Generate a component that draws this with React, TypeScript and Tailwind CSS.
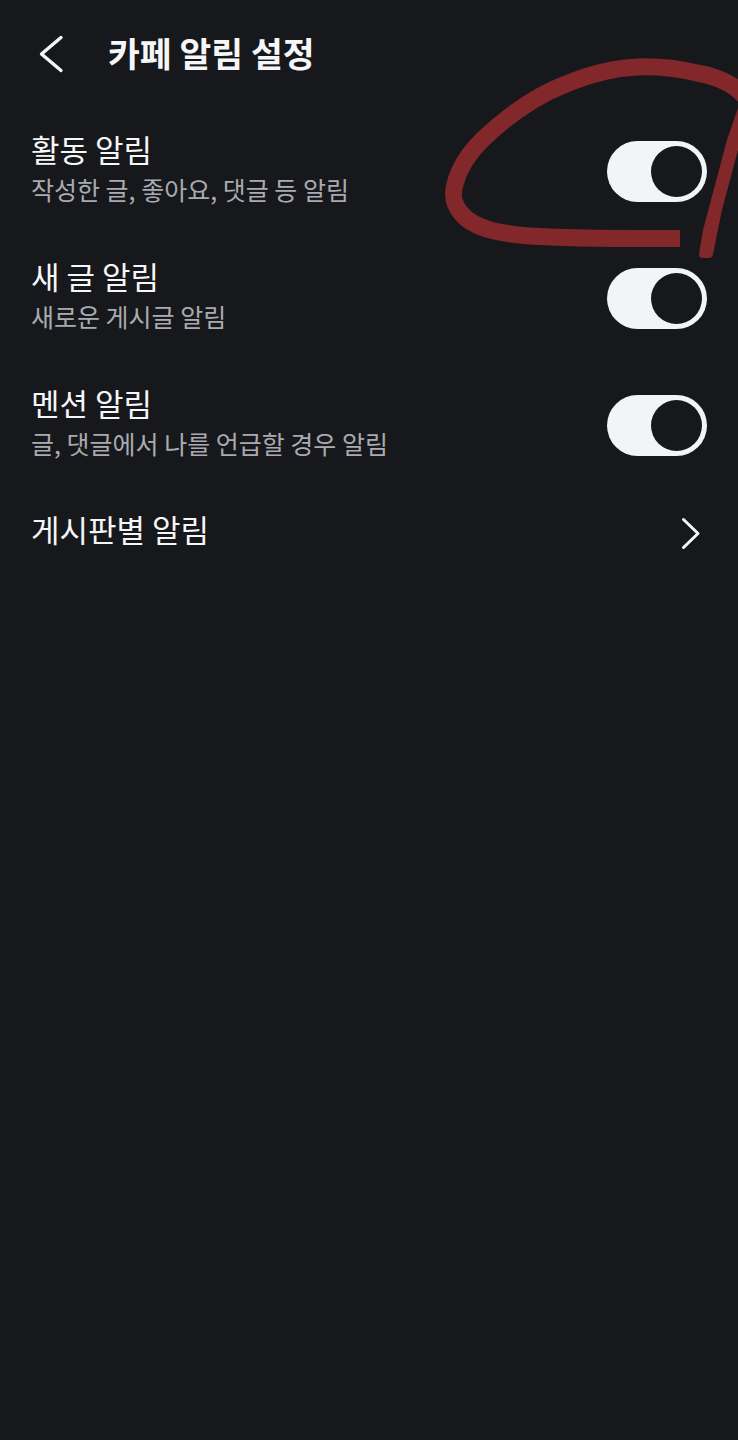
import React from 'react';

const FONT = 'font-["Noto_Sans_CJK_KR","Noto_Sans",sans-serif]';

function Toggle() {
  return (
    <div className="flex h-[61px] w-[100px] shrink-0 items-center justify-end rounded-full bg-[#f3f4f6] pr-[5px]">
      <div className="h-[51px] w-[51px] rounded-full bg-[#17181c]" />
    </div>
  );
}

function SettingRow({ title, desc }: { title: string; desc: string }) {
  return (
    <div className="flex h-[127px] items-center justify-between px-[31px]">
      <div className="flex flex-col pb-[5px]">
        <span className="text-[31px] leading-[40px] text-[#f5f6f8]">{title}</span>
        <span className="text-[25px] leading-[40px] text-[#a9abb0]">{desc}</span>
      </div>
      <Toggle />
    </div>
  );
}

export default function App() {
  return (
    <div className={`relative h-[1440px] w-[738px] overflow-hidden bg-[#17181c] ${FONT}`}>
      {/* Header */}
      <div className="flex h-[108px] items-center pl-[38px]">
        <svg width="26" height="40" viewBox="0 0 26 40" fill="none" className="mr-[44px]">
          <path d="M23 3.5 L3.5 20 L23 36.5" stroke="#f5f6f8" strokeWidth="3.4" strokeLinecap="round" strokeLinejoin="round" />
        </svg>
        <h1 className="pb-[4px] text-[34.6px] font-bold leading-none text-[#f5f6f8]">카페 알림 설정</h1>
      </div>

      <SettingRow title="활동 알림" desc="작성한 글, 좋아요, 댓글 등 알림" />
      <SettingRow title="새 글 알림" desc="새로운 게시글 알림" />
      <SettingRow title="멘션 알림" desc="글, 댓글에서 나를 언급할 경우 알림" />

      <div className="flex h-[84px] items-center justify-between pl-[31px] pr-[37px]">
        <span className="pb-[3px] text-[31px] text-[#f5f6f8]">게시판별 알림</span>
        <svg width="20" height="33" viewBox="0 0 20 33" fill="none" className="mt-1">
          <path d="M2.5 2.5 L17 16.5 L2.5 30.5" stroke="#f5f6f8" strokeWidth="3" strokeLinecap="round" strokeLinejoin="round" />
        </svg>
      </div>

      {/* Hand-drawn marker over the screenshot */}
      <svg width="738" height="1440" viewBox="0 0 738 1440" fill="none" className="absolute left-0 top-0">
        <path
          d="M680 238.5 C650 238.5 570 239 530 236 C505 234 474 230 461 213 C453 204 452 195 455 184 C459 168 469 153 482 140 C505 118 535 96 566 84 C590 74 615 68 637 67 C660 66 680 69 697 73 C715 76 735 84 745 97"
          stroke="#82272a"
          strokeWidth="17"
          strokeLinejoin="round"
        />
        <path
          d="M738 108 L727 140 L715 185 L703 230 L699 254 Q699 258 703 258 L709 258 Q712 258 713 254 L722 210 L738 150 Z"
          fill="#82272a"
        />
      </svg>
    </div>
  );
}
